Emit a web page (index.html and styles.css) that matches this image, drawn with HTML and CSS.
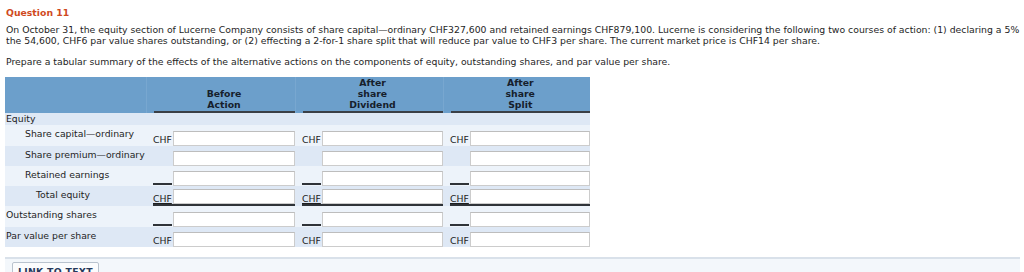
FILE: index.html
```html
<!DOCTYPE html>
<html>
<head>
<meta charset="utf-8">
<link rel="stylesheet" href="styles.css">
</head>
<body>
<div class="page">
  <div class="q-title">Question 11</div>
  <p class="q-text">On October 31, the equity section of Lucerne Company consists of share capital—ordinary CHF327,600 and retained earnings CHF879,100. Lucerne is considering the following two courses of action: (1) declaring a 5% the 54,600, CHF6 par value shares outstanding, or (2) effecting a 2-for-1 share split that will reduce par value to CHF3 per share. The current market price is CHF14 per share.</p>
  <p class="q-text">Prepare a tabular summary of the effects of the alternative actions on the components of equity, outstanding shares, and par value per share.</p>

  <table class="grid">
    <colgroup>
      <col class="c-lbl"><col class="c-v1"><col class="c-v2"><col class="c-v3">
    </colgroup>
    <thead>
      <tr>
        <th></th>
        <th><div class="hd">Before<br>Action</div></th>
        <th><div class="hd">After<br>share<br>Dividend</div></th>
        <th><div class="hd">After<br>share<br>Split</div></th>
      </tr>
    </thead>
    <tbody>
      <tr class="dark r-eq">
        <td class="lbl">Equity</td><td></td><td></td><td></td>
      </tr>
      <tr class="light r21">
        <td class="lbl ind1">Share capital—ordinary</td>
        <td><div class="fld"><span class="pre">CHF</span><span class="box"></span></div></td>
        <td><div class="fld"><span class="pre">CHF</span><span class="box"></span></div></td>
        <td><div class="fld"><span class="pre">CHF</span><span class="box"></span></div></td>
      </tr>
      <tr class="dark">
        <td class="lbl ind1">Share premium—ordinary</td>
        <td><div class="fld"><span class="pre"></span><span class="box"></span></div></td>
        <td><div class="fld"><span class="pre"></span><span class="box"></span></div></td>
        <td><div class="fld"><span class="pre"></span><span class="box"></span></div></td>
      </tr>
      <tr class="light">
        <td class="lbl ind1">Retained earnings</td>
        <td><div class="fld"><span class="pre line"></span><span class="box"></span></div></td>
        <td><div class="fld"><span class="pre line"></span><span class="box"></span></div></td>
        <td><div class="fld"><span class="pre line"></span><span class="box"></span></div></td>
      </tr>
      <tr class="dark">
        <td class="lbl ind2">Total equity</td>
        <td><div class="fld total"><span class="pre ul">CHF</span><span class="box"></span></div></td>
        <td><div class="fld total"><span class="pre ul">CHF</span><span class="box"></span></div></td>
        <td><div class="fld total"><span class="pre ul">CHF</span><span class="box"></span></div></td>
      </tr>
      <tr class="light r21">
        <td class="lbl">Outstanding shares</td>
        <td><div class="fld"><span class="pre line"></span><span class="box"></span></div></td>
        <td><div class="fld"><span class="pre line"></span><span class="box"></span></div></td>
        <td><div class="fld"><span class="pre line"></span><span class="box"></span></div></td>
      </tr>
      <tr class="dark">
        <td class="lbl">Par value per share</td>
        <td><div class="fld"><span class="pre">CHF</span><span class="box"></span></div></td>
        <td><div class="fld"><span class="pre">CHF</span><span class="box"></span></div></td>
        <td><div class="fld"><span class="pre">CHF</span><span class="box"></span></div></td>
      </tr>
    </tbody>
  </table>

  <div class="footer">
    <span class="link-btn">LINK TO TEXT</span>
  </div>
</div>
</body>
</html>
```

FILE: styles.css
```css
html, body {
  margin: 0;
  padding: 0;
  background: #ffffff;
}
body {
  font-family: "DejaVu Sans", Verdana, sans-serif;
  font-size: 9.3px;
  color: #1e1e1e;
}
.page {
  padding: 7px 4px 0 5px;
}
.q-title {
  font-weight: bold;
  color: #cf4a1d;
  line-height: 11px;
  margin: 0 0 6px 1px;
}
.q-text {
  margin: 0 0 10px 1px;
  line-height: 11px;
}
.grid {
  border-collapse: collapse;
  table-layout: fixed;
  width: 585px;
  margin-top: 5px;
}
.c-lbl { width: 141px; }
.c-v1 { width: 149px; }
.c-v2 { width: 148px; }
.c-v3 { width: 147px; }

.grid thead tr {
  height: 35px;
}
.grid thead th {
  background: #6c9fcb;
  padding: 0 0 0 7px;
  vertical-align: bottom;
  border-left: 1px solid #78a7d0;
  color: #16202c;
  font-weight: bold;
  line-height: 11px;
}
.grid thead th:first-child {
  border-left: none;
}
.hd {
  text-align: center;
  border-bottom: 2px solid #3a3f46;
  padding-bottom: 1px;
}
.grid td {
  padding: 0 0 0 7px;
  vertical-align: bottom;
}
.grid td.lbl {
  padding: 3px 0 0 1px;
  vertical-align: top;
  line-height: 11px;
  white-space: nowrap;
}
.grid td.ind1 { padding-left: 20px; }
.grid td.ind2 { padding-left: 31px; }
.grid tr.r-eq {
  height: 12px;
}
.grid tr.r-eq td.lbl {
  padding-top: 0;
}
.dark td { background: #dee8f5; }
.light td { background: #edf3fa; }

.fld {
  display: flex;
  align-items: flex-end;
  height: 20px;
  box-sizing: border-box;
}
.r21 .fld {
  height: 21px;
}
.fld.total {
  border-bottom: 2px solid #2f3338;
}
.pre {
  width: 20px;
  flex: none;
  line-height: 11px;
  box-sizing: border-box;
  height: 11px;
  margin-bottom: 1px;
}
.pre.line {
  border-bottom: 2px solid #2f3338;
  margin-bottom: 1px;
  width: 19px;
  margin-right: 1px;
}
.pre.ul {
  text-decoration: underline;
  margin-bottom: 0;
}
.box {
  flex: 1;
  height: 15px;
  background: #ffffff;
  border: 1px solid #cccccc;
  border-top-color: #bdbdbd;
  box-sizing: border-box;
}
.footer {
  margin-top: 10px;
  border-top: 2px solid #d9e1ea;
  background: #f3f7fb;
  height: 30px;
  padding: 3px 0 0 7px;
  box-sizing: border-box;
}
.link-btn {
  display: inline-block;
  border: 1px solid #b9c3ce;
  background: #fbfcfd;
  color: #26395a;
  font-weight: bold;
  padding: 3px 5px;
  letter-spacing: 0.3px;
  border-radius: 2px;
}
```
